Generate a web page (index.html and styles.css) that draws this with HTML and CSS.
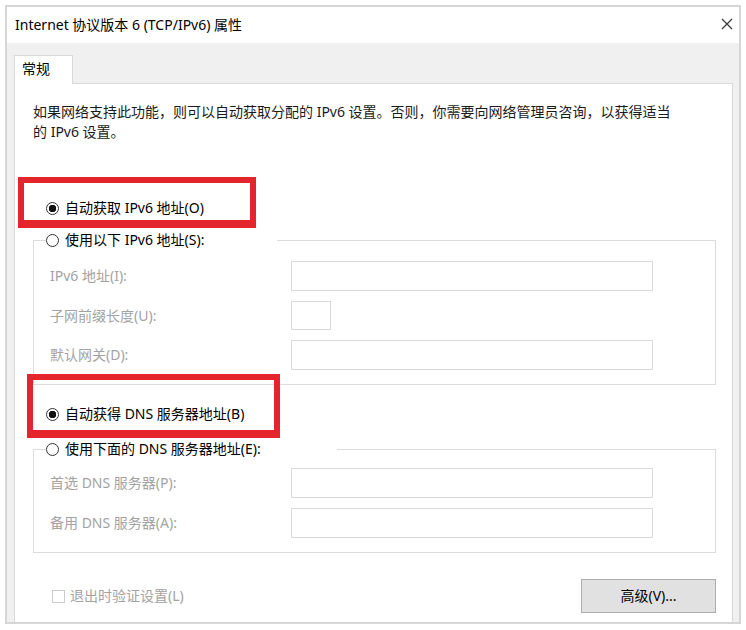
FILE: index.html
```html
<!DOCTYPE html>
<html lang="zh-CN">
<head>
    <meta charset="UTF-8">
    <title>Internet 协议版本 6 (TCP/IPv6) 属性</title>
    <link rel="stylesheet" href="styles.css">
</head>
<body>
<div class="window">
    <div class="titlebar">
        <span class="title">Internet 协议版本 6 (TCP/IPv6) 属性</span>
        <svg class="close" width="12" height="12" viewBox="0 0 12 12">
            <path d="M1 1L11 11M11 1L1 11" stroke="#3a3a3a" stroke-width="1.3" fill="none"/>
        </svg>
    </div>
    <div class="tabs">
        <span class="tab">常规</span>
    </div>
    <div class="panel">
        <p class="desc">如果网络支持此功能，则可以自动获取分配的 IPv6 设置。否则，你需要向网络管理员咨询，以获得适当的 IPv6 设置。</p>

        <label class="radio-row first">
            <input type="radio" name="ip" checked>
            <span>自动获取 IPv6 地址(O)</span>
            <span class="mark mark-ip"></span>
        </label>
        <fieldset class="group group-ip">
            <legend class="legend-ip">
                <label class="radio-row">
                    <input type="radio" name="ip">
                    <span>使用以下 IPv6 地址(S):</span>
                </label>
            </legend>
            <div class="fields">
                <span class="lbl">IPv6 地址(I):</span>
                <span class="box wide"></span>
                <span class="lbl">子网前缀长度(U):</span>
                <span class="box small"></span>
                <span class="lbl">默认网关(D):</span>
                <span class="box wide"></span>
            </div>
        </fieldset>

        <label class="radio-row dns">
            <input type="radio" name="dns" checked>
            <span>自动获得 DNS 服务器地址(B)</span>
            <span class="mark mark-dns"></span>
        </label>
        <fieldset class="group group-dns">
            <legend class="legend-dns">
                <label class="radio-row">
                    <input type="radio" name="dns">
                    <span>使用下面的 DNS 服务器地址(E):</span>
                </label>
            </legend>
            <div class="fields">
                <span class="lbl">首选 DNS 服务器(P):</span>
                <span class="box wide"></span>
                <span class="lbl">备用 DNS 服务器(A):</span>
                <span class="box wide"></span>
            </div>
        </fieldset>

        <div class="bottom">
            <label class="check">
                <span class="checkbox"></span>
                <span>退出时验证设置(L)</span>
            </label>
            <button class="btn">高级(V)...</button>
        </div>
    </div>
</div>
</body>
</html>
```

FILE: styles.css
```css
*{
    margin: 0;
    padding: 0;
    box-sizing: border-box;
}
body{
    background: #fff;
    font-family: "Noto Sans", "Noto Sans CJK SC", sans-serif;
    font-size: 14px;
    line-height: 20px;
    color: #111;
}
.window{
    width: 736px;
    height: 619px;
    margin: 5px 0 0 5px;
    border: 2px solid #d6d6d6;
    background: #f0f0f0;
    display: flex;
    flex-direction: column;
}
.titlebar{
    height: 36px;
    background: #fff;
    display: flex;
    align-items: center;
    justify-content: space-between;
    padding: 0 6px 0 8px;
}
.title{
    color: #000;
}
.close{
    margin-top: -2px;
}
.tabs{
    display: flex;
    padding: 12px 0 0 7px;
}
.tab{
    position: relative;/*压住面板上边框*/
    width: 59px;
    height: 29px;
    margin-bottom: -1px;
    padding: 3px 0 0 7px;
    background: #fff;
    border: 1px solid #d9d9d9;
    border-bottom: none;
    color: #000;
}
.panel{
    flex: 1;
    margin: 0 6px 0 7px;
    background: #fff;
    border: 1px solid #d9d9d9;
    border-bottom: none;
    padding: 18px 16px 0 18px;
}
.desc{
    max-width: 645px;
    color: #1a1a1a;
}
.radio-row{
    position: relative;
    display: flex;
    align-items: center;
    height: 20px;
    gap: 6px;
    color: #000;
}
.radio-row.first{
    margin-top: 56px;
    padding-left: 13px;
}
.radio-row.dns{
    margin-top: 19px;
    padding-left: 13px;
}
.radio-row input{
    appearance: none;
    width: 13px;
    height: 13px;
    border: 1px solid #333;
    border-radius: 50%;
    background: #fff;
    flex: none;
}
.radio-row input:checked{
    background: radial-gradient(circle, #111 0 3.5px, #fff 4px);
}
.group{
    border: 1px solid #dcdcdc;
    padding: 0 16px 14px 16px;
}
.group-ip{
    margin-top: 12px;
}
.group-dns{
    margin-top: 15px;
    padding-bottom: 14px;
}
.group legend{
    margin-left: -4px;
    background: #fff;
}
.legend-ip{
    width: 231px;
}
.legend-dns{
    width: 291px;
}
.fields{
    display: grid;
    grid-template-columns: 241px 1fr;
    row-gap: 10px;
    align-items: center;
    padding-top: 11px;
}
.group-dns .fields{
    padding-top: 9px;
}
.lbl{
    color: #a3a3a3;
}
.box{
    display: block;
    height: 30px;
    border: 1px solid #dadada;
    background: #fff;
}
.box.wide{
    width: 362px;
}
.box.small{
    width: 40px;
    height: 29px;
}
.mark{
    position: absolute;
    border: 6px solid #e4262c;
    border-bottom-width: 8px;
    pointer-events: none;
}
.mark-ip{
    left: -15px;
    top: -21px;
    width: 238px;
    height: 51px;
}
.mark-dns{
    left: -6px;
    top: -30px;
    width: 253px;
    height: 64px;
}
.bottom{
    display: flex;
    align-items: center;
    justify-content: space-between;
    margin-top: 26px;
}
.check{
    display: flex;
    align-items: center;
    gap: 5px;
    padding-left: 19px;
    color: #a3a3a3;
}
.checkbox{
    width: 13px;
    height: 13px;
    border: 1px solid #cccccc;
}
.btn{
    width: 135px;
    height: 34px;
    background: #e1e1e1;
    border: 1px solid #adadad;
    font: inherit;
    color: #000;
}
```
